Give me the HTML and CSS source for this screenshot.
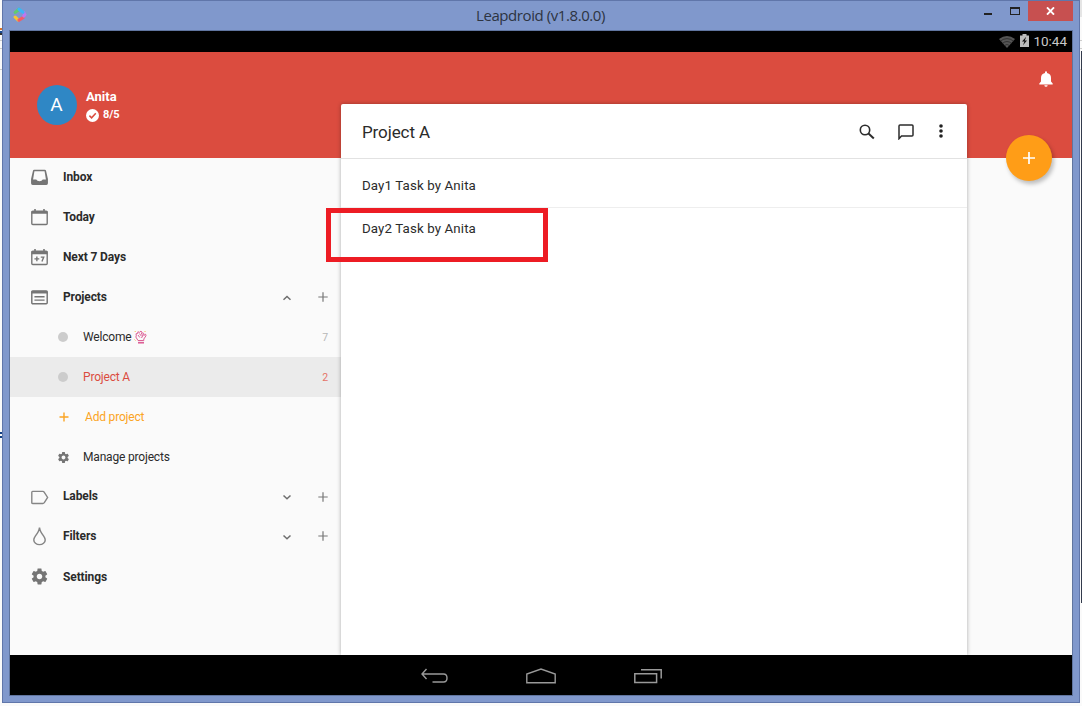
FILE: index.html
```html
<!DOCTYPE html>
<html lang="en">
<head>
<meta charset="utf-8">
<title>Leapdroid (v1.8.0.0)</title>
<link rel="stylesheet" href="styles.css">
</head>
<body>
<div class="desktop">
  <i class="speck speck-orange"></i><i class="speck speck-blue"></i><i class="speck speck-dark"></i><i class="rule rule-a"></i><i class="rule rule-b"></i><i class="rule rule-c"></i><i class="right-top"></i><i class="right-edge"></i>
  <div class="window">
    <header class="titlebar">
      <svg class="logo" width="14" height="16" viewBox="0 0 14 16" fill="none" stroke-width="3.2" stroke-linecap="round">
        <path d="M6 2.2 2.3 5.4" stroke="#60cb70"/><path d="M2.2 10.2 5 12.8" stroke="#f6c533"/><path d="M6 13.2 10.2 10.5" stroke="#f45c66"/><path d="M10.8 5.6 11.8 7.6 10.8 9" stroke="#bd76ef"/><path d="M6 2.3 10 5.2" stroke="#3cb5f8"/>
      </svg>
      <span class="window-title">Leapdroid (v1.8.0.0)</span>
      <div class="controls">
        <span class="minimize"></span><span class="maximize"></span>
        <span class="close"><svg width="9" height="8" viewBox="0 0 9 8"><path d="M1 .4 8 7.6M8 .4 1 7.6" stroke="#fff" stroke-width="1.9"/></svg></span>
      </div>
    </header>
    <div class="screen">
      <div class="statusbar">
        <svg width="16" height="12" viewBox="0 0 16 12"><path d="M0 3Q8-3 16 3L8 12Z" fill="#555"/><path d="M1.500 5Q8 .2 14.500 5M3.500 7.300Q8 3.800 12.500 7.300M5.500 9.500Q8 7.500 10.500 9.500" fill="none" stroke="#222" stroke-width=".7"/></svg>
        <svg class="battery" width="9" height="13" viewBox="0 0 9 14" preserveAspectRatio="none"><path d="M2.5 0h4v1.5H9V14H0V1.5h2.5z" fill="#bcbcbc"/><path d="M6.2 3 2 8h2.4L3 12l4-5H4.8z" fill="#111"/></svg>
        <span class="clock">10:44</span>
      </div>
      <div class="app">
        <aside class="sidebar">
          <div class="profile">
            <div class="avatar">A</div>
            <div class="who">
              <div class="name">Anita</div>
              <div class="karma"><svg width="13" height="13" viewBox="0 0 13 13"><circle cx="6.5" cy="6.5" r="6.5" fill="#fff"/><path d="m3.4 6.6 2.2 2.2 4.2-4.6" fill="none" stroke="#db4c3f" stroke-width="1.5"/></svg><span>8/5</span></div>
            </div>
          </div>
          <nav>
            <div class="row main"><svg class="icon" viewBox="0 0 18 18"><path fill-rule="evenodd" d="M4 1.700h10q1 0 1.200 1L17 10.500v4q0 1.500-1.500 1.500h-13Q1 16 1 14.500v-4L2.800 2.700Q3 1.700 4 1.700ZM4.200 3 2.900 11h3q.8 1.600 3.100 1.600t3.100-1.600h3L13.800 3Z" fill="#757575"/></svg><span>Inbox</span></div>
            <div class="row main"><svg class="icon" viewBox="0 0 18 18"><rect x="1.700" y="3" width="14.600" height="12.600" rx="1" fill="none" stroke="#757575" stroke-width="1.300"/><path d="M1.500 2.800h15V5.500h-15zM4 1h1.500v2H4zM12.500 1H14v2h-1.500z" fill="#757575"/></svg><span>Today</span></div>
            <div class="row main"><svg class="icon" viewBox="0 0 18 18"><rect x="1.700" y="3" width="14.600" height="12.600" rx="1" fill="none" stroke="#757575" stroke-width="1.300"/><path d="M1.500 2.800h15V6h-15zM4 1h1.500v2H4zM12.500 1H14v2h-1.500z" fill="#757575"/><path d="M4.200 10.300h4.600M6.500 8v4.600M10.200 8.600H13L11.300 12.800" fill="none" stroke="#757575" stroke-width="1.300"/></svg><span>Next 7 Days</span></div>
            <div class="row main"><svg class="icon" viewBox="0 0 18 18"><rect x="1.700" y="2.900" width="14.600" height="12" rx="1" fill="none" stroke="#757575" stroke-width="1.400"/><path d="M1.500 2.700h15v2.500h-15z" fill="#757575"/><path d="M4.200 8.300h9.600M4.200 11.500h9.600" stroke="#757575" stroke-width="1.300"/></svg><span>Projects</span><svg class="chev" viewBox="0 0 10 8"><path d="m1.500 5.800 3.500-3.300 3.500 3.300"/></svg><svg class="plus" viewBox="0 0 10 10"><path d="M5 .3v9.400M.3 5h9.400"/></svg></div>
            <div class="row sub"><i class="dot"></i><span>Welcome</span><svg class="wave" width="13" height="14" viewBox="0 0 13 14" fill="none" stroke="#dc6096" stroke-width="1"><path d="M4 10.500 1.800 7 2.300 5.800 2 3.800l1.600-.3.3-1.700 1.600.5L7 1l1.300 2 1.400.3.100 2.200 1.800-1.300.4 1.600L9.800 9v1.500ZM4 5l1.800 2.500M5.300 3.500 7.500 6.200M7.200 2.800l1.500 3L7.500 8"/><path d="M4 12.700h6" stroke-width="1.700"/><path d="m.8 2 .8-1M10.500 1l1 1M.5 9.500l1 1" stroke="#f9ba50"/></svg><span class="count">7</span></div>
            <div class="row sub selected"><i class="dot"></i><span>Project A</span><span class="count">2</span></div>
            <div class="row sub add"><svg class="small" viewBox="0 0 12 12"><path d="M6 1.500v9M1.500 6h9" stroke="#faa423" stroke-width="1.400"/></svg><span>Add project</span></div>
            <div class="row sub"><svg class="small" viewBox="2 2 20 20"><use href="#gear"/></svg><span>Manage projects</span></div>
            <div class="row main labels"><svg class="icon" viewBox="0 0 18 18"><path d="M2.500 3.200h9.700q.8 0 1.200.6l3.300 5.200-3.300 5q-.4.700-1.200.7H2.500q-.8 0-.8-.8V4q0-.8.800-.8Z" fill="none" stroke="#858585" stroke-width="1.300"/></svg><span>Labels</span><svg class="chev" viewBox="0 0 10 8"><path d="m1.500 2.500 3.500 3.300 3.500-3.300"/></svg><svg class="plus" viewBox="0 0 10 10"><path d="M5 .3v9.400M.3 5h9.400"/></svg></div>
            <div class="row main"><svg class="icon" viewBox="0 0 18 18"><path d="M9 .5Q8.700 4 5.200 8.400 3.500 10.800 3.600 12.200a5.400 4.500 0 0 0 10.800 0Q14.500 10.800 12.800 8.400 9.300 4 9 .5Z" fill="none" stroke="#858585" stroke-width="1.400"/></svg><span>Filters</span><svg class="chev" viewBox="0 0 10 8"><path d="m1.500 2.500 3.500 3.300 3.500-3.300"/></svg><svg class="plus" viewBox="0 0 10 10"><path d="M5 .3v9.400M.3 5h9.400"/></svg></div>
            <div class="row main settings"><svg class="icon" viewBox="0 0 24 24"><path id="gear" fill="#757575" d="M19.430 12.980c.04-.32.070-.64.070-.98s-.03-.66-.07-.98l2.110-1.650c.19-.15.240-.42.120-.64l-2-3.460c-.12-.22-.39-.3-.61-.22l-2.490 1c-.52-.4-1.080-.73-1.690-.98l-.38-2.650C14.460 2.180 14.250 2 14 2h-4c-.25 0-.46.180-.49.420l-.38 2.650c-.61.250-1.170.590-1.690.980l-2.490-1c-.23-.09-.49 0-.61.220l-2 3.460c-.13.220-.07.490.120.640l2.110 1.650c-.04.320-.07.650-.07.980s.030.660.070.980l-2.110 1.650c-.19.150-.24.420-.12.640l2 3.460c.12.220.390.300.610.220l2.490-1c.52.400 1.080.730 1.690.980l.38 2.650c.03.240.240.420.490.420h4c.25 0 .46-.18.490-.42l.38-2.650c.61-.25 1.170-.59 1.690-.98l2.490 1c.23.090.49 0 .61-.22l2-3.460c.12-.22.070-.49-.12-.64l-2.110-1.650zM12 15.500c-1.930 0-3.500-1.570-3.500-3.500s1.570-3.500 3.500-3.500 3.500 1.570 3.500 3.500-1.570 3.500-3.500 3.500z"/></svg><span>Settings</span></div>
          </nav>
        </aside>
        <main class="card">
          <div class="card-head">
            <h1>Project A</h1>
            <svg class="search" width="16" height="16" viewBox="0 0 16 16" fill="none" stroke="#2c2c2c"><circle cx="6" cy="6" r="4.700" stroke-width="1.600"/><path d="m9.500 9.500 5.300 5" stroke-width="2"/></svg>
            <svg class="comment" width="16" height="16" viewBox="0 0 16 16"><path d="M1 14.700V2q0-1 1-1h12q1 0 1 1v9q0 1-1 1H3.500Z" fill="none" stroke="#2c2c2c" stroke-width="1.500"/></svg>
            <svg class="more" width="4" height="14" viewBox="0 0 4 14" fill="#222"><circle cx="2" cy="2" r="1.800"/><circle cx="2" cy="7" r="1.800"/><circle cx="2" cy="12" r="1.800"/></svg>
          </div>
          <div class="task first">Day1 Task by Anita</div>
          <div class="task second">Day2 Task by Anita</div>
        </main>
        <div class="rail">
          <svg class="bell" width="14" height="16" viewBox="0 0 14 16"><path d="M6 1.200a1 1 0 0 1 2 0V2c3 .7 4 2.500 4 5v3.500l1.700 2v1H.3v-1l1.700-2V7c0-2.500 1-4.300 4-5ZM5.300 14.300h3.400q-.2 1.500-1.700 1.500t-1.700-1.500Z" fill="#fff"/></svg>
          <div class="fab"><svg width="12" height="12" viewBox="0 0 12 12"><path d="M6 0v12M0 6h12" stroke="#fff" stroke-width="1.700"/></svg></div>
        </div>
        <div class="highlight"></div>
      </div>
      <footer class="navbar">
        <svg width="28" height="16" viewBox="0 0 28 16"><path d="M6.500 1 2 6 6.500 11M2 6H23.500q3.500 0 3.500 4t-3.500 4H12.500" fill="none" stroke="#999" stroke-width="1.400"/></svg>
        <svg width="30" height="16" viewBox="0 0 30 16"><path d="M.8 14.700V6L15 1.100 29.200 6v8.700Z" fill="none" stroke="#999" stroke-width="1.400"/></svg>
        <svg width="28" height="16" viewBox="0 0 28 16"><path d="M.8 5.700h21.800v8.800H.8ZM7 1.700h20.200V10.500" fill="none" stroke="#999" stroke-width="1.500"/></svg>
      </footer>
    </div>
  </div>
</div>
</body>
</html>
```

FILE: styles.css
```css
* { box-sizing: border-box; }
body { margin: 0; font-family: Roboto, sans-serif; color: #2b2b2b; }
svg { display: block; flex: none; }
.desktop { position: relative; width: 1082px; height: 706px; padding: 0 2px 3px; background: #fafafa; overflow: hidden; }
.window { position: relative; display: flex; flex-direction: column; height: 703px; padding: 0 7px 7px 6px; background: #8098cc; border: 1px solid #6076aa; }

/* Slivers of the desktop left visible around the window */
.speck { position: absolute; left: 0; width: 2px; height: 2px; }
.speck-orange { top: 28px; background: #d9752a; }
.speck-blue { top: 31px; background: #194b91; box-shadow: 0 2px #333; }
.speck-dark { top: 432px; background: #123f83; box-shadow: 0 4px #123f83; }
.rule { position: absolute; left: 0; width: 1082px; height: 1px; background: #ccc; }
.rule-a { top: 40px; } .rule-b { top: 48px; } .rule-c { top: 69px; }
.right-top { position: absolute; right: 0; top: 0; width: 2px; height: 17px; background: #e5e5e5; }
.right-edge { position: absolute; right: 0; top: 51px; width: 1px; height: 552px; background: #333b4c; }

.titlebar { display: grid; grid-template-columns: 1fr auto 1fr; height: 29px; flex: none; }
.logo { margin: 6px 0 0 4px; }
.window-title { font: 15px/29px "Open Sans", sans-serif; letter-spacing: -.42px; color: #2d3442; }
.controls { display: flex; justify-content: flex-end; margin-right: -1px; }
.minimize { width: 8px; height: 2px; margin: 12px 18px 0 0; background: #222; }
.maximize { width: 10px; height: 8px; margin: 6px 8px 0 0; border: 1px solid #222; border-top-width: 2px; }
.close { display: grid; place-items: center; width: 45px; height: 20px; background: #c75050; }

.screen { display: flex; flex-direction: column; flex: none; width: 1064px; height: 666px; border: 1px solid #60759f; }
.statusbar { display: flex; align-items: center; justify-content: flex-end; height: 21px; padding-right: 5px; background: #000; }
.battery { margin: 0 4px 2px 5px; }
.clock { font-size: 13.500px; color: #c8c8c8; line-height: 21px; }
.app { position: relative; display: grid; grid-template-columns: 331px 626px 105px; height: 603px; background: linear-gradient(#db4c3f 105.500px, #fafafa 106px); }
.profile { display: flex; height: 105px; padding: 33px 0 0 26.500px; color: #fff; }
.avatar { width: 40px; height: 40px; border-radius: 50%; background: #2f87c5; font-size: 19px; line-height: 40px; text-align: center; }
.who { padding: 4px 0 0 9.500px; font-weight: 700; }
.name { font-size: 13px; line-height: 16px; }
.karma { display: flex; align-items: center; gap: 4px; margin-top: 1px; font-size: 11px; line-height: 18px; letter-spacing: -.1px; }
.row { display: flex; align-items: center; height: 40px; padding-right: 11px; font-size: 12px; }
.main { padding-left: 20px; font-weight: 700; }
.main > span { margin-left: 14px; letter-spacing: -.12px; }
.icon { width: 19px; height: 19px; margin-top: 1px; }
.chev { width: 10px; height: 8px; margin: 1px 0 0 auto; fill: none; stroke: #6e6e6e; stroke-width: 1.500; }
.plus { width: 10px; height: 10px; margin: 0 2px 0 26px; fill: none; stroke: #777; stroke-width: 1.200; }
.sub { padding-left: 48px; letter-spacing: -.18px; }
.dot { width: 10px; height: 10px; border-radius: 50%; background: #ccc; margin: 0 15px 1px 0; }
.small { width: 11px; height: 11px; margin-right: 14px; }
.wave { margin-left: 2px; }
.count { margin-left: auto; padding-right: 2px; font-size: 10.500px; color: #b7b7b7; }
.selected { background: #ebebeb; color: #db4c3f; }
.selected .count { color: #e57368; }
.add { color: #faa423; }
.add .small { width: 12px; height: 12px; margin-right: 15px; }
.labels { height: 39px; }
.labels > span { padding-bottom: 1px; }
.settings > span { padding-top: 1px; }

.card { margin-top: 52px; background: #fff; border-radius: 2px 2px 0 0; box-shadow: 0 0 4px rgba(0, 0, 0, .32); clip-path: inset(-4px -6px 0 -6px); }
.card-head { display: flex; align-items: center; height: 55px; padding: 0 24px 0 21px; border-bottom: 1px solid #e2e2e2; }
.search, .comment { margin-top: 1px; }
h1 { margin: 2px auto 0 0; font-size: 17px; font-weight: 400; letter-spacing: -.1px; }
.comment { margin-left: 23px; margin-right: 25px; }
.task { padding-left: 21px; font-size: 13.300px; letter-spacing: .12px; }
.first { height: 49px; line-height: 54px; border-bottom: 1px solid #eee; }
.second { line-height: 42px; }
.rail { display: flex; flex-direction: column; align-items: center; }
.bell { margin: 19px 0 0 52px; }
.fab { display: grid; place-items: center; width: 46px; height: 46px; margin: 48px 0 0 18px; border-radius: 50%; background: #ff9d17; box-shadow: 2px 3px 4px rgba(0, 0, 0, .25); }
.highlight { position: absolute; left: 316px; top: 156px; width: 222px; height: 54px; border: 5px solid #ed1c24; }
.navbar { display: flex; justify-content: center; align-items: center; gap: 78px; height: 40px; padding-top: 1px; background: #000; }
```
